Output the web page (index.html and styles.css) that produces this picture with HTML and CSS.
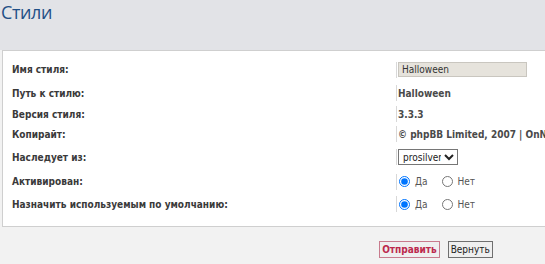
FILE: index.html
```html
<!DOCTYPE html>
<html lang="ru">
<head>
<meta charset="utf-8">
<title>Стили</title>
<link rel="stylesheet" href="styles.css">
</head>
<body>
<div class="page">
  <header class="top">
    <h1 class="title">Стили</h1>
  </header>
  <main class="main">
    <form class="form">
      <fieldset class="box">
        <div class="row r1">
          <div class="label">Имя стиля:</div>
          <div class="value"><input class="text-input" type="text" value="Halloween"></div>
        </div>
        <div class="row r2">
          <div class="label">Путь к стилю:</div>
          <div class="value strong">Halloween</div>
        </div>
        <div class="row r3">
          <div class="label">Версия стиля:</div>
          <div class="value strong">3.3.3</div>
        </div>
        <div class="row r4">
          <div class="label">Копирайт:</div>
          <div class="value strong nowrap">© phpBB Limited, 2007 | OnNo! Themes</div>
        </div>
        <div class="row r5">
          <div class="label">Наследует из:</div>
          <div class="value"><select class="sel"><option>prosilver</option></select></div>
        </div>
        <div class="row r6">
          <div class="label">Активирован:</div>
          <div class="value radios">
            <label class="opt"><input type="radio" name="a" checked> Да</label>
            <label class="opt"><input type="radio" name="a"> Нет</label>
          </div>
        </div>
        <div class="row r7">
          <div class="label">Назначить используемым по умолчанию:</div>
          <div class="value radios">
            <label class="opt"><input type="radio" name="b" checked> Да</label>
            <label class="opt"><input type="radio" name="b"> Нет</label>
          </div>
        </div>
      </fieldset>
      <div class="actions">
        <button type="button" class="btn btn-submit">Отправить</button>
        <button type="button" class="btn btn-reset">Вернуть</button>
      </div>
    </form>
  </main>
</div>
</body>
</html>
```
FILE: styles.css
```css
html, body {
  margin: 0;
  padding: 0;
  overflow: hidden;
  height: 100%;
}
body {
  background: #f2f2f2;
  font-family: "DejaVu Sans Condensed", "DejaVu Sans", Verdana, sans-serif;
  font-size: 10px;
  color: #333;
}
.page {
  width: 900px;
}
.top {
  background: #e2e3e7;
  height: 50px;
  padding-left: 1px;
}
.title {
  margin: 0;
  font-family: "Open Sans", "DejaVu Sans", sans-serif;
  font-weight: normal;
  font-size: 18px;
  letter-spacing: -0.4px;
  line-height: 24px;
  color: #1f4f86;
}
.main {
  background: #f2f2f2;
}
.form {
  margin: 0;
  width: 868px;
  padding-left: 2px;
}
.box {
  margin: 0;
  padding: 6px 0 11px 0;
  border: 1px solid #cfcfcf;
  background: #fff;
  min-width: 0;
}
.row {
  display: flex;
  align-items: center;
}
.r1 { height: 25px; }
.r2 { height: 22px; }
.r3 { height: 20px; }
.r4 { height: 20px; }
.r5 { height: 26px; }
.r6 { height: 23px; }
.r7 { height: 22px; }
.label {
  width: 384px;
  padding-left: 9px;
  font-weight: bold;
  color: #3a3a3a;
}
.value {
  border-left: 1px solid #d8d8d8;
  padding-left: 1px;
  display: flex;
  align-items: center;
  min-height: 16px;
  color: #4a4a4a;
}
.strong { font-weight: bold; }
.nowrap { white-space: nowrap; }
.text-input {
  width: 129px;
  height: 15px;
  box-sizing: border-box;
  border: 1px solid #c9c6bf;
  background: #e6e3dc;
  font-family: "DejaVu Sans Condensed", "DejaVu Sans", sans-serif;
  font-size: 10px;
  color: #333;
  padding: 0 3px;
  margin: 0;
}
.sel {
  width: 60px;
  height: 16px;
  font-family: "DejaVu Sans Condensed", "DejaVu Sans", sans-serif;
  font-size: 10px;
  color: #222;
  border: 1px solid #767676;
  background: #fff;
  padding: 0;
  margin: 0;
}
.radios {
  gap: 13px;
}
.opt {
  display: inline-flex;
  align-items: center;
  gap: 3px;
  color: #555;
  font-size: 10px;
}
.opt input {
  margin: 0 2px 0 1px;
  width: 11px;
  height: 11px;
}
.actions {
  display: flex;
  justify-content: center;
  gap: 8px;
  padding-top: 14px;
}
.btn {
  font-family: "DejaVu Sans Condensed", "DejaVu Sans", sans-serif;
  font-size: 10px;
  height: 17px;
  padding: 0 2px;
  margin: 0;
  background: #efefef;
  border-radius: 0;
}
.btn-submit {
  color: #bc2a4d;
  font-weight: bold;
  border: 1px solid #c87b8d;
}
.btn-reset {
  color: #222;
  border: 1px solid #6f6f6f;
}
```
